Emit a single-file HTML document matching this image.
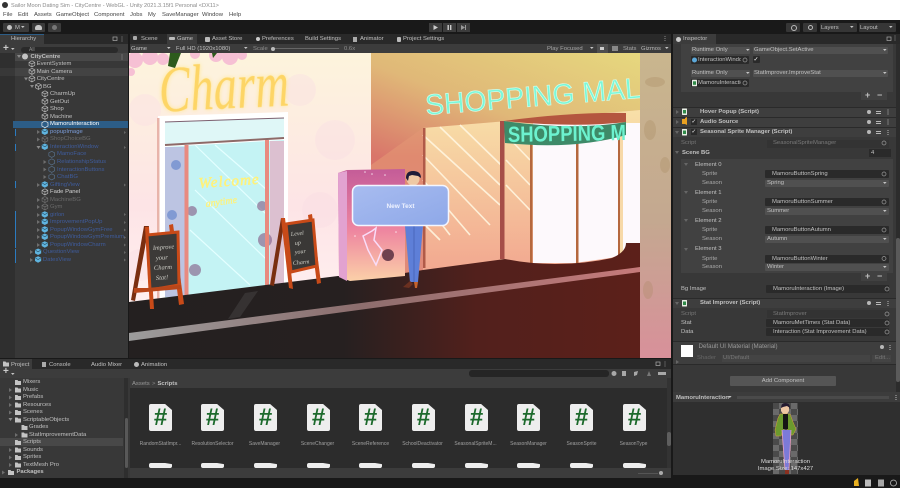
<!DOCTYPE html>
<html><head><meta charset="utf-8"><style>
html,body{margin:0;padding:0}
body{width:900px;height:488px;overflow:hidden;background:#191919;position:relative;font-family:"Liberation Sans",sans-serif}
.b{position:absolute}
.t{position:absolute;white-space:nowrap;font:5.9px/8px "Liberation Sans",sans-serif;color:#c0c0c0}
.d{color:#8e8e8e}.u{color:#3f5c9c}.w{color:#fff}.k{color:#444}.s{font-weight:bold}
.dd{position:absolute;background:#505050;height:7.5px;border-radius:1px}
.ob{position:absolute;background:#2a2a2a;height:8px;border-radius:1px}
.doc{position:absolute;width:23px;height:27px;background:#eee;border-radius:2px;clip-path:polygon(0 0,70% 0,100% 22%,100% 100%,0 100%);text-align:center;font:bold 24px/28px "Liberation Sans",sans-serif;color:#1c6a2c}
.doc2{height:5px;top:463px}
.l{position:absolute;top:440px;width:53px;text-align:center;font:5px/8px "Liberation Sans",sans-serif;color:#a0a0a0;white-space:nowrap}
</style></head><body>
<svg width="0" height="0" style="position:absolute"><defs>
<g id="c" transform="scale(1.15)"><path d="M2.8 .3 5.3 1.6V4.2L2.8 5.6 .3 4.2V1.6Z M.3 1.6 2.8 3 5.3 1.6 M2.8 3V5.6" fill="none" stroke="#b4b4b4" stroke-width=".6"/></g>
<g id="cd" transform="scale(1.15)"><path d="M2.8 .3 5.3 1.6V4.2L2.8 5.6 .3 4.2V1.6Z M.3 1.6 2.8 3 5.3 1.6 M2.8 3V5.6" fill="none" stroke="#707070" stroke-width=".6"/></g>
<g id="p" transform="scale(1.1)"><path d="M2.8 0 5.6 1.4V4.4L2.8 5.9 0 4.4V1.4Z" fill="#5fb4df"/><path d="M.4 1.6 2.8 3 5.2 1.6" fill="none" stroke="#274a5e" stroke-width=".5"/></g>
<g id="pd" transform="scale(1.15)"><path d="M2.8 .3 5.3 1.6V4.2L2.8 5.6 .3 4.2V1.6Z" fill="none" stroke="#58708a" stroke-width=".6"/></g>
<path id="r" d="M0 0 3 2 0 4Z" fill="#6e6e6e"/>
<path id="v" d="M0 0H4L2 3Z" fill="#8a8a8a"/>
<path id="fo" d="M0 1H2.5L3.2 2H6V6H0Z" fill="#c4c4c4"/>
<path id="a" d="M0 0H3.6L1.8 2Z" fill="#c4c4c4"/>
<g id="sc"><rect x="0" y="0" width="5" height="6.5" rx=".5" fill="#e8eee4"/><rect x="1" y="1.5" width="3" height="3.5" fill="#2f8a48"/></g>
</defs></svg>

<!-- window chrome -->
<div class="b" style="left:0;top:0;width:900px;height:20px;background:#fff"></div>
<div class="b" style="left:2px;top:2px;width:6px;height:6px;border-radius:50%;background:#333"></div>
<div class="t" style="left:11px;top:1.5px;color:#8a8a8a;font-size:5.6px">Sailor Moon Dating Sim - CityCentre - WebGL - Unity 2021.3.15f1 Personal &lt;DX11&gt;</div>
<div class="t k" style="left:3px;top:11px">File</div><div class="t k" style="left:18px;top:11px">Edit</div><div class="t k" style="left:34px;top:11px">Assets</div><div class="t k" style="left:56px;top:11px">GameObject</div><div class="t k" style="left:94px;top:11px">Component</div><div class="t k" style="left:130px;top:11px">Jobs</div><div class="t k" style="left:148px;top:11px">My</div><div class="t k" style="left:162px;top:11px">SaveManager</div><div class="t k" style="left:202px;top:11px">Window</div><div class="t k" style="left:229px;top:11px">Help</div>

<!-- toolbar -->
<div class="b" style="left:3px;top:23px;width:26px;height:9px;background:#3b3b3b;border-radius:1px"></div>
<div class="b" style="left:32px;top:23px;width:13px;height:9px;background:#3b3b3b;border-radius:1px"></div>
<div class="b" style="left:48px;top:23px;width:13px;height:9px;background:#3b3b3b;border-radius:1px"></div>
<div class="b" style="left:7px;top:25px;width:5px;height:5px;border-radius:50%;background:#c4c4c4"></div>
<div class="t" style="left:15px;top:23.5px">M</div>
<div class="b" style="left:35px;top:25px;width:7px;height:5px;border-radius:3px 3px 1px 1px;background:#c8c8c8"></div>
<div class="b" style="left:52px;top:25px;width:5px;height:5px;border-radius:50%;background:#777"></div>
<div class="b" style="left:429px;top:23px;width:13px;height:9px;background:#3c3c3c"></div>
<div class="b" style="left:443px;top:23px;width:13px;height:9px;background:#3c3c3c"></div>
<div class="b" style="left:457px;top:23px;width:13px;height:9px;background:#3c3c3c"></div>
<svg class="b" style="left:429px;top:23px" width="41" height="9"><path d="M4.5 2 9 4.5 4.5 7Z" fill="#ccc"/><path d="M18.5 2h1.4v5h-1.4zM21 2h1.4v5H21z" fill="#ccc"/><path d="M32 2 36 4.5 32 7Zm4 0h1v5h-1z" fill="#999"/></svg>
<div class="b" style="left:786px;top:23px;width:14px;height:9px;background:#363636;border-radius:1px"></div>
<div class="b" style="left:803px;top:23px;width:14px;height:9px;background:#363636;border-radius:1px"></div>
<div class="b" style="left:820px;top:23px;width:37px;height:9px;background:#363636;border-radius:1px"></div>
<div class="b" style="left:859px;top:23px;width:37px;height:9px;background:#363636;border-radius:1px"></div>
<div class="b" style="left:790.5px;top:25px;width:4px;height:4px;border:.8px solid #bbb;border-radius:50%"></div>
<div class="b" style="left:807.5px;top:25px;width:3px;height:3px;border:.8px solid #bbb;border-radius:50%"></div>
<div class="t" style="left:821px;top:23.5px">Layers</div><div class="t" style="left:860px;top:23.5px">Layout</div>

<!-- hierarchy -->
<div class="b" style="left:0;top:34px;width:128px;height:10px;background:#292929"></div>
<div class="b" style="left:0;top:34px;width:44px;height:10px;background:#3c3c3c;border-top:1px solid #2c5d87;box-sizing:border-box"></div>
<div class="b" style="left:0;top:44px;width:128px;height:9px;background:#3c3c3c"></div>
<div class="b" style="left:0;top:53px;width:128px;height:305px;background:#383838"></div>
<div class="b" style="left:0;top:53px;width:15px;height:305px;background:#2f2f2f"></div>
<div class="b" style="left:15px;top:53px;width:113px;height:7.5px;background:#484848"></div>
<div class="b" style="left:15px;top:68px;width:113px;height:7.5px;background:#434343"></div>
<div class="b" style="left:0;top:68px;width:15px;height:7.5px;background:#383838"></div>
<div class="b" style="left:13px;top:120.7px;width:115px;height:7.5px;background:#2c5d87"></div>
<div class="b" style="left:21px;top:47px;width:97px;height:6px;background:#2a2a2a;border-radius:3px"></div>
<div class="t" style="left:11px;top:35px">Hierarchy</div>
<div class="t d" style="left:29px;top:45.5px;font-size:5px">All</div>
<div class="t" style="left:3px;top:44.5px;font-size:10px;font-weight:bold;color:#ccc">+</div>
<div class="b" style="left:15px;top:128.5px;width:1px;height:7px;background:#2b7bc0"></div>
<div class="b" style="left:15px;top:143.5px;width:1px;height:7px;background:#2b7bc0"></div>
<div class="b" style="left:15px;top:181px;width:1px;height:7px;background:#2b7bc0"></div>
<div class="b" style="left:15px;top:211px;width:1px;height:37px;background:#2b7bc0"></div>
<div class="b" style="left:15px;top:248.5px;width:1px;height:14.5px;background:#2b7bc0"></div>
<div class="t s" style="left:30.5px;top:52.7px">CityCentre</div>
<div class="t" style="left:36.7px;top:60px">EventSystem</div>
<div class="t" style="left:36.7px;top:67.6px">Main Camera</div>
<div class="t" style="left:36.7px;top:75px">CityCentre</div>
<div class="t" style="left:43px;top:82.5px">BG</div>
<div class="t" style="left:50px;top:90px">CharmUp</div>
<div class="t" style="left:50px;top:97.7px">GetOut</div>
<div class="t" style="left:50px;top:105px">Shop</div>
<div class="t" style="left:50px;top:112.7px">Machine</div>
<div class="t w" style="left:50px;top:120.2px">MamoruInteraction</div>
<div class="t" style="left:50px;top:127.7px;color:#7b9cd8">popupImage</div>
<div class="t d" style="left:50px;top:135.3px;color:#6a6a6a">ShopChoiceBG</div>
<div class="t u" style="left:50px;top:143px">InteractionWindow</div>
<div class="t u" style="left:57px;top:150.3px">MamoFace</div>
<div class="t u" style="left:57px;top:158px">RelationshipStatus</div>
<div class="t u" style="left:57px;top:165.5px">InteractionButtons</div>
<div class="t u" style="left:57px;top:173px">ChatBG</div>
<div class="t u" style="left:50px;top:180.7px">GiftingView</div>
<div class="t" style="left:50px;top:188px;color:#d4d4d4">Fade Panel</div>
<div class="t" style="left:50px;top:195.7px;color:#6a6a6a">MachineBG</div>
<div class="t" style="left:50px;top:203px;color:#6a6a6a">Gym</div>
<div class="t u" style="left:50px;top:210.7px">girlon</div>
<div class="t u" style="left:50px;top:218px">ImprovementPopUp</div>
<div class="t u" style="left:50px;top:225.7px">PopupWindowGymFree</div>
<div class="t u" style="left:50px;top:233px">PopupWindowGymPremium</div>
<div class="t u" style="left:50px;top:240.7px">PopupWindowCharm</div>
<div class="t u" style="left:43px;top:248px">QuestionView</div>
<div class="t u" style="left:43px;top:255.7px">DatesView</div>

<!-- scene tabs -->
<div class="b" style="left:130px;top:34px;width:541px;height:10px;background:#292929"></div>
<div class="b" style="left:167px;top:34px;width:30px;height:10px;background:#3c3c3c"></div>
<div class="b" style="left:130px;top:44px;width:541px;height:9px;background:#3c3c3c"></div>
<div class="t" style="left:141px;top:35px">Scene</div><div class="t" style="left:177px;top:35px">Game</div>
<div class="t" style="left:212px;top:35px">Asset Store</div><div class="t" style="left:262px;top:35px">Preferences</div>
<div class="t" style="left:305px;top:35px">Build Settings</div><div class="t" style="left:360px;top:35px">Animator</div><div class="t" style="left:403px;top:35px">Project Settings</div>
<div class="b" style="left:133px;top:36px;width:4px;height:4px;background:#aaa;border-radius:1px"></div>
<div class="b" style="left:169px;top:37px;width:6px;height:3px;background:#bbb;border-radius:1px"></div>
<div class="b" style="left:205px;top:36.5px;width:5px;height:5px;background:#bbb;border-radius:1px"></div>
<div class="b" style="left:256px;top:37px;width:4px;height:4px;background:#ccc;border-radius:50%"></div>
<div class="b" style="left:353px;top:36.5px;width:4px;height:5px;background:#aaa"></div>
<div class="b" style="left:397px;top:36.5px;width:4px;height:5px;background:#bbb;border-radius:1px"></div>
<div class="t" style="left:131px;top:44.5px">Game</div>
<div class="t" style="left:176px;top:44.5px">Full HD (1920x1080)</div>
<div class="t d" style="left:253px;top:44.5px">Scale</div>
<div class="b" style="left:271px;top:48px;width:68px;height:1px;background:#666"></div>
<div class="b" style="left:271px;top:46.5px;width:4px;height:4px;border-radius:50%;background:#bbb"></div>
<div class="t d" style="left:344px;top:44.5px">0.6x</div>
<div class="t d" style="left:547px;top:44.5px;color:#a8a8a8">Play Focused</div>
<div class="b" style="left:597px;top:44px;width:11px;height:9px;background:#4e4e4e"></div>
<div class="t d" style="left:623px;top:44.5px;color:#a8a8a8">Stats</div>
<div class="t d" style="left:641px;top:44.5px;color:#b8b8b8">Gizmos</div>
<svg class="b" style="left:0;top:0" width="900" height="60"><use href="#a" x="167" y="47"/><use href="#a" x="244" y="47"/><use href="#a" x="590" y="47"/><use href="#a" x="665" y="47"/><rect x="612" y="46" width="6" height="5" fill="#888"/><rect x="600" y="47" width="4" height="3" fill="#ccc"/></svg>

<!-- game scene -->
<svg class="b" style="left:129px;top:53px;filter:blur(.35px)" width="542" height="305" viewBox="129 53 542 305">
<defs>
<linearGradient id="g1" x1="1" y1="0" x2=".1" y2="1"><stop offset="0" stop-color="#e6d87e"/><stop offset=".55" stop-color="#e0b878"/><stop offset="1" stop-color="#d9756a"/></linearGradient>
<linearGradient id="g2" x1="0" y1="0" x2="0" y2="1"><stop offset="0" stop-color="#e0b87c"/><stop offset=".45" stop-color="#e08a70"/><stop offset="1" stop-color="#e08a7a"/></linearGradient>
<linearGradient id="fl" x1="0" y1="0" x2="1" y2="0"><stop offset="0" stop-color="#242020"/><stop offset=".42" stop-color="#262020"/><stop offset=".68" stop-color="#52201c"/><stop offset="1" stop-color="#5c201a"/></linearGradient>
<linearGradient id="st" x1="0" y1="0" x2="1" y2="0"><stop offset="0" stop-color="#9c9c9c"/><stop offset=".45" stop-color="#8d6e6e"/><stop offset="1" stop-color="#c67a7a"/></linearGradient>
<linearGradient id="pi" x1="0" y1="0" x2="0" y2="1"><stop offset="0" stop-color="#c9b68e"/><stop offset=".55" stop-color="#c4a890"/><stop offset="1" stop-color="#d8909a"/></linearGradient>
<linearGradient id="pk" x1="0" y1="0" x2="0" y2="1"><stop offset="0" stop-color="#c45c98"/><stop offset=".55" stop-color="#ee86a0"/><stop offset="1" stop-color="#fbd0a8"/></linearGradient>
<linearGradient id="w1" x1="0" y1="0" x2="0" y2="1"><stop offset="0" stop-color="#f8e0a8"/><stop offset="1" stop-color="#f2a890"/></linearGradient>
<linearGradient id="bt" x1="0" y1="0" x2="1" y2="1"><stop offset="0" stop-color="#a8bcf0"/><stop offset="1" stop-color="#8ea8e8"/></linearGradient>
<linearGradient id="le" x1="0" y1="0" x2="0" y2="1"><stop offset="0" stop-color="#fdf4dc"/><stop offset=".6" stop-color="#fde4e6"/><stop offset="1" stop-color="#fff0f0"/></linearGradient>
<clipPath id="cm"><rect x="423" y="53" width="217" height="230"/></clipPath>
</defs>
<rect x="129" y="53" width="242" height="255" fill="url(#le)"/>
<g fill="#f6c0d4"><circle cx="135" cy="60" r="8"/><circle cx="150" cy="57" r="8"/><circle cx="163" cy="59" r="6"/><circle cx="230" cy="57" r="8"/><circle cx="216" cy="55" r="7"/><circle cx="242" cy="55" r="5"/><circle cx="195" cy="54" r="5"/><circle cx="131" cy="72" r="4"/></g>
<g fill="#f9dce4" opacity=".35"><circle cx="300" cy="90" r="16"/><circle cx="335" cy="140" r="20"/><circle cx="145" cy="110" r="16"/><circle cx="140" cy="265" r="16"/><circle cx="320" cy="210" r="18"/></g>
<!-- mall wall -->
<rect x="371" y="53" width="269" height="230" fill="url(#g2)"/>
<path d="M371 53H640V110L423 128 371 165Z" fill="url(#g1)"/>
<!-- windows -->
<path d="M423 128 640 110V262L423 270Z" fill="url(#w1)"/>
<g stroke="#fff6e0" stroke-width="1.6" opacity=".9"><path d="M440 127 500 185M460 125 501 165M423 135 500 205M423 155 490 225M423 180 470 235M423 200 450 235M425 225 440 240M506 135 530 160M506 160 530 185M506 185 530 210"/></g>
<path d="M533 123H640V248L628 253 610 258 575 263H533Z" fill="#fdf9fc"/>
<path d="M619 118 623 118V257H619Z" fill="#f7d9a8"/>
<rect x="423" y="128" width="2.5" height="140" fill="#b05a48"/>
<rect x="500" y="121" width="4.5" height="138" fill="#a64e48"/>
<rect x="530" y="130" width="2.5" height="134" fill="#b5683e"/>
<rect x="576" y="130" width="2.5" height="134" fill="#b5683e"/>
<rect x="618" y="125" width="2" height="130" fill="#b5683e"/>
<!-- banner -->
<path d="M504 121Q570 112 626 113 L626 122Q575 128 504 121Z" fill="#b4563f"/>
<path d="M504 121Q575 131 626 122V135Q575 150 505 143Z" fill="#3e8a68"/>
<text transform="translate(508 142) rotate(-1)" font-family="Liberation Sans" font-weight="bold" font-size="22" fill="#6cf2cf" textLength="118" lengthAdjust="spacingAndGlyphs">SHOPPING M</text>
<!-- mall neon -->
<g clip-path="url(#cm)"><text transform="translate(426 115) rotate(-4.600)" font-family="Liberation Sans" font-size="29" fill="#7cf8d8" stroke="#d8fff0" stroke-width=".6" textLength="216" lengthAdjust="spacingAndGlyphs">SHOPPING MAL</text></g>
<!-- pillar -->
<rect x="640" y="53" width="31" height="305" fill="url(#pi)"/>
<g fill="#a8895f" opacity=".3"><ellipse cx="655" cy="82" rx="10" ry="5"/><ellipse cx="650" cy="130" rx="6" ry="10"/><ellipse cx="665" cy="165" rx="5" ry="8"/><ellipse cx="648" cy="290" rx="5" ry="9"/></g>
<!-- left storefront -->
<path d="M158 116 288 112V282L158 304Z" fill="#fff"/>
<rect x="157" y="118" width="2.5" height="185" fill="#e8b4aa"/>
<path d="M165 122 284 118V138L165 145Z" fill="#dff7f7"/>
<path d="M165 145 284 138" stroke="#8e6a68" stroke-width="2"/>
<path d="M165 122 284 118" stroke="#7c6070" stroke-width="1"/>
<path d="M165 147 284 140V283L165 300Z" fill="#c4f3f4"/>
<g stroke="#e4ffff" stroke-width="1.2"><path d="M195 145 267 215M195 190 267 260M190 230 250 285M215 145 267 190"/></g>
<path d="M165 147H186V297H165Z" fill="#bcc4e2"/>
<path d="M270 141H284V283L270 285Z" fill="#dcc0d0"/>
<g fill="#8c6c92" opacity=".7"><circle cx="192" cy="211" r="5"/><circle cx="262" cy="206" r="5"/><circle cx="265" cy="240" r="7"/><circle cx="195" cy="270" r="6"/></g>
<g fill="#5278c8" opacity=".55"><circle cx="172" cy="215" r="5"/><circle cx="175" cy="280" r="6"/><circle cx="176" cy="165" r="5"/></g>
<rect x="184.5" y="145" width="4" height="153" fill="#e88a80"/>
<rect x="265" y="140" width="4" height="145" fill="#e88a80"/>
<text transform="translate(199 188) rotate(-4)" font-family="Liberation Serif" font-style="italic" font-size="15" fill="#fff27a" stroke="#fff27a" stroke-width=".5" textLength="60">Welcome</text>
<text transform="translate(206 207) rotate(-8)" font-family="Liberation Serif" font-style="italic" font-size="10" fill="#fff27a" stroke="#fff27a" stroke-width=".3">anytime</text>
<!-- charm -->
<text transform="translate(160 112) rotate(-3)" font-family="Liberation Serif" font-style="italic" font-size="66" fill="#fdd566" textLength="130" lengthAdjust="spacingAndGlyphs" style="filter:drop-shadow(0 0 2px #ffe890)">Charm</text>
<path d="M170 53 181 53 175 68 168 66Z" fill="#2d5a1c"/><path d="M212 53 217 53 213 58Z" fill="#2d5a1c"/>
<!-- floor -->
<path d="M129 302 338 276 368 279 423 270 505 259Q530 264 555 264 585 264 612 258 626 252 626 243L640 243V358H129Z" fill="url(#fl)"/>
<path d="M129 333 640 267 640 272 129 341Z" fill="url(#st)"/>
<path d="M228 319 245 293 258 291 240 317Z" fill="#555" opacity=".35"/>
<!-- pink booth -->
<path d="M338 173 347 170 405 169V276L350 281 339 277Z" fill="url(#pk)"/>
<path d="M338 173 347 171V281L339 277Z" fill="#e2a2d0"/>
<path d="M363 236 372 231 376 228 374 240 382 250 376 265 368 250Z" fill="none" stroke="#f9dcf8" stroke-width="1.5"/>
<circle cx="388" cy="255" r="6" fill="#70414f"/>
<g fill="#fff" opacity=".75"><circle cx="372" cy="174" r=".8"/><circle cx="385" cy="175" r=".8"/><circle cx="355" cy="236" r=".8"/><circle cx="396" cy="232" r=".8"/><circle cx="365" cy="172" r=".8"/></g>
<!-- character -->
<path d="M405 226H423L418 282H410Z" fill="#5e7fd8"/>
<path d="M414 226V282" stroke="#3c58a8" stroke-width=".6"/>
<path d="M403 287 410 281 413 284 409 288Z" fill="#6b3020"/><path d="M414 282H418L417 288H415Z" fill="#c4622c"/>
<circle cx="413" cy="179" r="6.5" fill="#efc9a4"/>
<path d="M406 178Q406 171 413 171 421 171 421 178L418 176 412 175 409 176 408 181Z" fill="#1f1c38"/>
<path d="M406 185H421V188H406Z" fill="#a7a83c"/>
<!-- button -->
<rect x="352.5" y="185.5" width="96" height="40" rx="6" fill="url(#bt)" stroke="#f4f6ff" stroke-width="1.5"/>
<text x="400.5" y="208" text-anchor="middle" font-family="Liberation Sans" font-weight="bold" font-size="6.5" fill="#eef2ff">New Text</text>
<!-- signs -->
<g>
<path d="M144 226 131 300 135 301 149 226Z" fill="#7a2e10"/>
<path d="M173 224 184 304 179 305 169 225Z" fill="#c84a18"/>
<path d="M145 227 150 309 154 309 149 227Z" fill="#c84a18"/>
<path d="M147 235 178 232 179 285 150 290Z" fill="#3c3a38" stroke="#c84a18" stroke-width="3"/>
<path d="M134 288 147 288 181 285 181 289 134 293Z" fill="#b8461a"/>
<text transform="translate(153 250) rotate(-4)" font-family="Liberation Serif" font-style="italic" font-size="6.5" fill="#cfcfc8">Improve</text>
<text transform="translate(156 260) rotate(-4)" font-family="Liberation Serif" font-style="italic" font-size="6.5" fill="#cfcfc8">your</text>
<text transform="translate(154 270) rotate(-4)" font-family="Liberation Serif" font-style="italic" font-size="6.5" fill="#cfcfc8">Charm</text>
<text transform="translate(156 280) rotate(-4)" font-family="Liberation Serif" font-style="italic" font-size="6.5" fill="#cfcfc8">Stat!</text>
<path d="M281 218 270 285 274 286 285 218Z" fill="#7a2e10"/>
<path d="M281 218 289 288 293 289 285 218Z" fill="#c84a18"/>
<path d="M312 214 321 283 317 284 308 215Z" fill="#c84a18"/>
<path d="M286 224 313 220 317 266 291 272Z" fill="#3a3836" stroke="#c84a18" stroke-width="3"/>
<text transform="translate(291 236) rotate(-6)" font-family="Liberation Serif" font-style="italic" font-size="6" fill="#d0d0c8">Level</text>
<text transform="translate(295 245) rotate(-6)" font-family="Liberation Serif" font-style="italic" font-size="6" fill="#d0d0c8">up</text>
<text transform="translate(295 254) rotate(-6)" font-family="Liberation Serif" font-style="italic" font-size="6" fill="#d0d0c8">your</text>
<text transform="translate(293 265) rotate(-6)" font-family="Liberation Serif" font-style="italic" font-size="6" fill="#d0d0c8">Charm</text>
</g>
</svg>

<!-- inspector -->
<div class="b" style="left:673px;top:34px;width:227px;height:10px;background:#292929"></div>
<div class="b" style="left:673px;top:34px;width:43px;height:10px;background:#3c3c3c"></div>
<div class="b" style="left:673px;top:44px;width:227px;height:431px;background:#383838"></div>
<div class="b" style="left:896px;top:44px;width:4px;height:355px;background:#2c2c2c"></div>
<div class="b" style="left:896px;top:238px;width:4px;height:144px;background:#5a5a5a;border-radius:2px"></div>
<div class="t" style="left:683px;top:35px">Inspector</div>
<div class="b" style="left:676px;top:36.5px;width:5px;height:5px;background:#ccc;border-radius:50%"></div>
<div class="b" style="left:681px;top:44px;width:212px;height:48px;background:#414141"></div>
<div class="b" style="left:861px;top:92px;width:26px;height:8px;background:#414141"></div>
<div class="dd" style="left:691px;top:46.5px;width:59px"></div><div class="dd" style="left:753px;top:46.5px;width:135px"></div>
<div class="dd" style="left:691px;top:69.5px;width:59px"></div><div class="dd" style="left:753px;top:69.5px;width:135px"></div>
<div class="ob" style="left:691px;top:56px;width:58px"></div><div class="ob" style="left:691px;top:79px;width:58px"></div>
<div class="b" style="left:753px;top:56px;width:7px;height:7px;background:#2a2a2a;border-radius:1px"></div>
<div class="t" style="left:692px;top:46px">Runtime Only</div><div class="t" style="left:754px;top:46px">GameObject.SetActive</div>
<div class="t" style="left:698px;top:56px;width:43px;overflow:hidden">InteractionWindow</div><div class="t w" style="left:753.5px;top:55.5px">✓</div>
<div class="t" style="left:692px;top:69px">Runtime Only</div><div class="t" style="left:754px;top:69px">StatImprover.ImproveStat</div>
<div class="t" style="left:698px;top:79px;width:43px;overflow:hidden">MamoruInteraction</div>
<div class="t" style="left:865px;top:91px;font-size:9px;font-weight:bold">+</div><div class="t" style="left:877px;top:91px;font-size:9px;font-weight:bold">−</div>

<div class="b" style="left:673px;top:106.5px;width:223px;height:10px;background:#3e3e3e;border-top:1px solid #2a2a2a;box-sizing:border-box"></div>
<div class="b" style="left:673px;top:116.5px;width:223px;height:10px;background:#3e3e3e;border-top:1px solid #2a2a2a;box-sizing:border-box"></div>
<div class="b" style="left:673px;top:127px;width:223px;height:10px;background:#3e3e3e;border-top:1px solid #2a2a2a;box-sizing:border-box"></div>
<div class="t s" style="left:700px;top:107.7px">Hover Popup (Script)</div>
<div class="t s" style="left:700px;top:117.7px">Audio Source</div>
<div class="t s" style="left:700px;top:128px">Seasonal Sprite Manager (Script)</div>
<div class="b" style="left:691px;top:118.5px;width:6px;height:6px;background:#2a2a2a"></div><div class="b" style="left:691px;top:128.8px;width:6px;height:6px;background:#2a2a2a"></div>
<div class="t w" style="left:691.5px;top:117.5px;font-size:5.5px">✓</div><div class="t w" style="left:691.5px;top:127.8px;font-size:5.5px">✓</div>

<div class="t" style="left:681px;top:139px;color:#777">Script</div>
<div class="b" style="left:767px;top:139.5px;width:122px;height:8px;background:#333"></div>
<div class="t" style="left:773px;top:139px;color:#7a7a7a">SeasonalSpriteManager</div>
<div class="t s" style="left:682px;top:149px">Scene BG</div>
<div class="b" style="left:869px;top:149px;width:22px;height:8px;background:#2a2a2a"></div>
<div class="t" style="left:871px;top:149px">4</div>
<div class="b" style="left:681px;top:159px;width:212px;height:114px;background:#414141"></div>
<div class="t" style="left:695px;top:161px">Element 0</div><div class="t" style="left:702px;top:170px;color:#aaa">Sprite</div><div class="t" style="left:702px;top:179.3px;color:#aaa">Season</div>
<div class="t" style="left:695px;top:188.7px">Element 1</div><div class="t" style="left:702px;top:198px;color:#aaa">Sprite</div><div class="t" style="left:702px;top:207.3px;color:#aaa">Season</div>
<div class="t" style="left:695px;top:217px">Element 2</div><div class="t" style="left:702px;top:226px;color:#aaa">Sprite</div><div class="t" style="left:702px;top:235.3px;color:#aaa">Season</div>
<div class="t" style="left:695px;top:245.3px">Element 3</div><div class="t" style="left:702px;top:254.7px;color:#aaa">Sprite</div><div class="t" style="left:702px;top:263.3px;color:#aaa">Season</div>
<div class="ob" style="left:765px;top:170px;width:124px"></div><div class="dd" style="left:765px;top:179.5px;width:124px"></div>
<div class="ob" style="left:765px;top:198px;width:124px"></div><div class="dd" style="left:765px;top:207.5px;width:124px"></div>
<div class="ob" style="left:765px;top:226px;width:124px"></div><div class="dd" style="left:765px;top:235.5px;width:124px"></div>
<div class="ob" style="left:765px;top:254.7px;width:124px"></div><div class="dd" style="left:765px;top:263.5px;width:124px"></div>
<div class="t" style="left:772px;top:170px">MamoruButtonSpring</div><div class="t" style="left:767px;top:179.3px">Spring</div>
<div class="t" style="left:772px;top:198px">MamoruButtonSummer</div><div class="t" style="left:767px;top:207.3px">Summer</div>
<div class="t" style="left:772px;top:226px">MamoruButtonAutumn</div><div class="t" style="left:767px;top:235.3px">Autumn</div>
<div class="t" style="left:772px;top:254.7px">MamoruButtonWinter</div><div class="t" style="left:767px;top:263.3px">Winter</div>
<div class="b" style="left:861px;top:272px;width:26px;height:9px;background:#414141"></div>
<div class="t" style="left:865px;top:272px;font-size:9px;font-weight:bold">+</div><div class="t" style="left:877px;top:272px;font-size:9px;font-weight:bold">−</div>
<div class="t" style="left:681px;top:285px">Bg Image</div>
<div class="ob" style="left:766px;top:285px;width:123px"></div>
<div class="t" style="left:773px;top:285px">MamoruInteraction (Image)</div>
<div class="b" style="left:673px;top:298px;width:223px;height:10px;background:#3e3e3e;border-top:1px solid #2a2a2a;box-sizing:border-box"></div>
<div class="t s" style="left:700px;top:298.7px">Stat Improver (Script)</div>
<div class="t" style="left:681px;top:309.7px;color:#777">Script</div>
<div class="b" style="left:767px;top:310px;width:122px;height:8px;background:#333"></div>
<div class="t" style="left:773px;top:309.7px;color:#7a7a7a">StatImprover</div>
<div class="t" style="left:681px;top:319px">Stat</div><div class="t" style="left:681px;top:328.3px">Data</div>
<div class="ob" style="left:766px;top:319px;width:123px"></div><div class="ob" style="left:766px;top:328.3px;width:123px"></div>
<div class="t" style="left:773px;top:319px">MamoruMetTimes (Stat Data)</div>
<div class="t" style="left:773px;top:328.3px">Interaction (Stat Improvement Data)</div>
<div class="b" style="left:673px;top:341px;width:223px;height:24px;background:#3e3e3e;border-top:1px solid #2a2a2a;border-bottom:1px solid #2a2a2a;box-sizing:border-box"></div>
<div class="b" style="left:681px;top:345px;width:12px;height:12px;background:#fff"></div>
<div class="t" style="left:698.5px;top:342.5px;font-size:6.2px;color:#999">Default UI Material (Material)</div>
<div class="t" style="left:697px;top:354px;color:#666">Shader</div>
<div class="b" style="left:722px;top:354.5px;width:148px;height:7.5px;background:#444"></div>
<div class="t" style="left:723px;top:354px;color:#777">UI/Default</div>
<div class="b" style="left:872px;top:354.5px;width:19px;height:7.5px;background:#444"></div>
<div class="t" style="left:875px;top:354px;color:#777">Edit...</div>
<div class="b" style="left:730px;top:376px;width:106px;height:10px;background:#555;border-radius:1px"></div>
<div class="t" style="left:730px;top:377px;width:106px;text-align:center">Add Component</div>
<div class="b" style="left:673px;top:392px;width:227px;height:10px;background:#3c3c3c"></div>
<div class="b" style="left:737px;top:396px;width:152px;height:3px;background:#4a4a4a"></div>
<div class="t s" style="left:676px;top:393.5px">MamoruInteraction</div>
<div class="b" style="left:673px;top:402px;width:227px;height:73px;background:#2f2f2f"></div>

<!-- preview sprite -->
<svg class="b" style="left:773px;top:403px" width="26" height="71" viewBox="773 403 26 71">
<defs><pattern id="ck" x="773" y="403" width="12" height="12" patternUnits="userSpaceOnUse"><rect width="12" height="12" fill="#6a6a6a"/><rect width="6" height="6" fill="#4a4a4a"/><rect x="6" y="6" width="6" height="6" fill="#4a4a4a"/></pattern></defs>
<rect x="773" y="403" width="25" height="71" fill="url(#ck)"/>
<path d="M781 406Q785 402 789 406L789 411 787 414H783L781 411Z" fill="#eec7a4"/>
<path d="M781 408Q781 403 785 403 790 403 790 408L787 406 783 407Z" fill="#251b30"/>
<path d="M780 414H790L793 422 796 429 793 435H790L787 428H784L781 436H776L775 430 778 418Z" fill="#6c9a2e" stroke="#d8a03c" stroke-width=".5"/>
<rect x="783" y="414" width="5" height="15" fill="#151515"/>
<path d="M782 430H791L789 470H785Z" fill="#7c7ad8"/>
<path d="M782 430 785 470" stroke="#e8a0c0" stroke-width=".8"/><path d="M791 430 789 470" stroke="#e8a0c0" stroke-width=".8"/>
<path d="M785 470H789V474H785Z" fill="#8a3020"/>
</svg>
<div class="t" style="left:673px;top:458px;width:225px;text-align:center;color:#ddd">MamoruInteraction</div>
<div class="t" style="left:673px;top:465.3px;width:225px;text-align:center;color:#ddd">Image Size: 147x427</div>

<!-- project -->
<div class="b" style="left:0;top:359px;width:671px;height:10px;background:#292929"></div>
<div class="b" style="left:0;top:359px;width:32px;height:10px;background:#3c3c3c"></div>
<div class="b" style="left:0;top:369px;width:671px;height:9px;background:#3c3c3c"></div>
<div class="b" style="left:0;top:378px;width:130px;height:100px;background:#383838"></div>
<div class="b" style="left:0;top:438.3px;width:123px;height:7.5px;background:#484848"></div>
<div class="b" style="left:124px;top:378px;width:4px;height:100px;background:#2e2e2e"></div>
<div class="b" style="left:124.5px;top:418px;width:3.5px;height:50px;background:#585858;border-radius:2px"></div>
<div class="b" style="left:130px;top:378px;width:541px;height:100px;background:#2c2c2c"></div>
<div class="b" style="left:130px;top:378px;width:541px;height:10px;background:#3c3c3c"></div>
<div class="b" style="left:130px;top:468px;width:541px;height:10px;background:#3c3c3c"></div>
<div class="b" style="left:469px;top:370px;width:140px;height:7px;background:#252525;border-radius:3px"></div>
<div class="t" style="left:11px;top:361px">Project</div><div class="t" style="left:49px;top:361px">Console</div><div class="t" style="left:91px;top:361px">Audio Mixer</div><div class="t" style="left:141px;top:361px">Animation</div>
<div class="b" style="left:42px;top:362px;width:4px;height:5px;background:#aaa"></div>
<div class="b" style="left:134px;top:362px;width:5px;height:5px;background:#bbb;border-radius:50%"></div>
<div class="t" style="left:3px;top:368px;font-size:10px;font-weight:bold;color:#ccc">+</div>
<div class="t" style="left:132px;top:379.5px;color:#999">Assets</div><div class="t" style="left:152px;top:379.5px;color:#888">&gt;</div><div class="t s" style="left:157.5px;top:379.5px">Scripts</div>
<div class="t" style="left:23px;top:378px">Mixers</div><div class="t" style="left:23px;top:385.5px">Music</div><div class="t" style="left:23px;top:393px">Prefabs</div><div class="t" style="left:23px;top:400.5px">Resources</div><div class="t" style="left:23px;top:408px">Scenes</div><div class="t" style="left:23px;top:415.5px">ScriptableObjects</div><div class="t" style="left:29px;top:423px">Grades</div><div class="t" style="left:29px;top:430.5px">StatImprovementData</div><div class="t" style="left:23px;top:438px">Scripts</div><div class="t" style="left:23px;top:445.5px">Sounds</div><div class="t" style="left:23px;top:453px">Sprites</div><div class="t" style="left:23px;top:460.5px">TextMesh Pro</div><div class="t s" style="left:16.5px;top:468px">Packages</div>

<div class="doc" style="left:149px;top:404px">#</div><div class="doc" style="left:201px;top:404px">#</div><div class="doc" style="left:254px;top:404px">#</div><div class="doc" style="left:307px;top:404px">#</div><div class="doc" style="left:359px;top:404px">#</div><div class="doc" style="left:412px;top:404px">#</div><div class="doc" style="left:465px;top:404px">#</div><div class="doc" style="left:517px;top:404px">#</div><div class="doc" style="left:570px;top:404px">#</div><div class="doc" style="left:623px;top:404px">#</div>
<div class="doc doc2" style="left:149px"></div><div class="doc doc2" style="left:201px"></div><div class="doc doc2" style="left:254px"></div><div class="doc doc2" style="left:307px"></div><div class="doc doc2" style="left:359px"></div><div class="doc doc2" style="left:412px"></div><div class="doc doc2" style="left:465px"></div><div class="doc doc2" style="left:517px"></div><div class="doc doc2" style="left:570px"></div><div class="doc doc2" style="left:623px"></div>
<div class="l" style="left:134px">RandomStatImpr...</div><div class="l" style="left:186px">ResolutionSelector</div><div class="l" style="left:238px">SaveManager</div><div class="l" style="left:291px">SceneChanger</div><div class="l" style="left:344px">SceneReference</div><div class="l" style="left:396px">SchoolDeactivator</div><div class="l" style="left:449px">SeasonalSpriteM...</div><div class="l" style="left:502px">SeasonManager</div><div class="l" style="left:555px">SeasonSprite</div><div class="l" style="left:607px">SeasonType</div>
<div class="b" style="left:667px;top:378px;width:4px;height:90px;background:#333"></div>
<div class="b" style="left:667px;top:432px;width:4px;height:14px;background:#5e5e5e;border-radius:2px"></div>
<div class="b" style="left:638px;top:472.5px;width:20px;height:1px;background:#555"></div>
<div class="b" style="left:659px;top:471px;width:4px;height:4px;border-radius:50%;background:#aaa"></div>

<!-- overlay icons -->
<svg class="b" style="left:0;top:0" width="900" height="488">
<use href="#v" x="17" y="55"/><use href="#c" x="28.7" y="60.5"/><use href="#c" x="28.7" y="68"/><use href="#v" x="24" y="77.5"/><use href="#c" x="28.7" y="75.5"/><use href="#v" x="30" y="85"/><use href="#c" x="35.2" y="83"/>
<circle cx="25" cy="56.5" r="3" fill="#c4c4c4"/>
<use href="#c" x="41.7" y="90.5"/><use href="#c" x="41.7" y="98"/><use href="#c" x="41.7" y="105.5"/><use href="#c" x="41.7" y="113"/><path d="M41.9 122.7 45 121 48 122.7V126L45 127.7 41.9 126Z" fill="none" stroke="#e8e8e8" stroke-width=".7"/>
<use href="#r" x="37" y="130"/><use href="#p" x="41.7" y="128.5"/><use href="#r" x="37" y="137.5"/><use href="#cd" x="41.7" y="136"/>
<use href="#v" x="36.5" y="146"/><use href="#p" x="41.7" y="143.5"/><use href="#pd" x="48.5" y="151"/>
<use href="#r" x="43.5" y="160"/><use href="#pd" x="48.5" y="158.5"/><use href="#r" x="43.5" y="167.5"/><use href="#pd" x="48.5" y="166"/><use href="#r" x="43.5" y="175"/><use href="#pd" x="48.5" y="173.5"/>
<use href="#r" x="37" y="183"/><use href="#p" x="41.7" y="181.2"/><use href="#c" x="41.7" y="188.5"/><use href="#r" x="37" y="198"/><use href="#cd" x="41.7" y="196.2"/><use href="#r" x="37" y="205"/><use href="#cd" x="41.7" y="203.5"/>
<use href="#r" x="37" y="213"/><use href="#p" x="41.7" y="211.2"/><use href="#r" x="37" y="220"/><use href="#p" x="41.7" y="218.5"/><use href="#r" x="37" y="228"/><use href="#p" x="41.7" y="226.2"/><use href="#r" x="37" y="235"/><use href="#p" x="41.7" y="233.5"/><use href="#r" x="37" y="243"/><use href="#p" x="41.7" y="241.2"/>
<use href="#r" x="30" y="250"/><use href="#p" x="35" y="248.5"/><use href="#r" x="30" y="258"/><use href="#p" x="35" y="256.2"/>
<g fill="#666"><path d="M124 131 126 132.5 124 134Z M124 146 126 147.5 124 149Z M124 183.5 126 185 124 186.5Z M124 213 126 214.5 124 216Z M124 221 126 222.5 124 224Z M124 228.5 126 230 124 231.5Z M124 236 126 237.5 124 239Z M124 243.5 126 245 124 246.5Z M124 251 126 252.5 124 254Z M124 258.5 126 260 124 261.5Z"/></g>
<g fill="#a8a8a8"><circle cx="122" cy="55" r=".5"/><circle cx="122" cy="57" r=".5"/><circle cx="122" cy="59" r=".5"/><circle cx="122" cy="37" r=".5"/><circle cx="122" cy="39" r=".5"/><circle cx="122" cy="41" r=".5"/><circle cx="665" cy="36.5" r=".5"/><circle cx="665" cy="38.5" r=".5"/><circle cx="665" cy="40.5" r=".5"/><circle cx="895" cy="36" r=".5"/><circle cx="895" cy="38" r=".5"/><circle cx="895" cy="40" r=".5"/><circle cx="665" cy="362" r=".5"/><circle cx="665" cy="364" r=".5"/><circle cx="665" cy="366" r=".5"/></g>
<rect x="113" y="37" width="4" height="3.5" fill="none" stroke="#aaa" stroke-width=".7"/><rect x="887" y="37" width="4" height="3.5" fill="none" stroke="#aaa" stroke-width=".7"/><rect x="656" y="362" width="4" height="3.5" fill="none" stroke="#aaa" stroke-width=".7"/>
<use href="#a" x="21" y="26"/><use href="#a" x="850" y="26"/><use href="#a" x="889" y="26"/><use href="#a" x="11" y="48"/><use href="#a" x="11" y="373"/>
<use href="#a" x="746" y="49"/><use href="#a" x="883" y="49"/><use href="#a" x="746" y="72"/><use href="#a" x="883" y="72"/>
<use href="#a" x="883" y="182"/><use href="#a" x="883" y="210"/><use href="#a" x="883" y="238"/><use href="#a" x="883" y="266"/>
<use href="#a" x="728" y="396"/>
<g fill="none" stroke="#9a9a9a" stroke-width=".7"><circle cx="745" cy="60" r="2"/><circle cx="745" cy="83" r="2"/><circle cx="884" cy="143" r="2"/><circle cx="884" cy="174" r="2"/><circle cx="884" cy="202" r="2"/><circle cx="884" cy="230" r="2"/><circle cx="884" cy="258.5" r="2"/><circle cx="887" cy="289" r="2"/><circle cx="887" cy="314" r="2"/><circle cx="887" cy="323" r="2"/><circle cx="887" cy="332" r="2"/></g>
<circle cx="694.5" cy="60" r="2.5" fill="#5ca8d8"/><use href="#sc" x="692" y="79.8"/>
<use href="#sc" x="682" y="108.5"/><use href="#sc" x="682" y="129"/><use href="#sc" x="682" y="300"/>
<rect x="682" y="119" width="3" height="5" fill="#e8a020"/><path d="M685 118 687 117V125L685 124Z" fill="#e8a020"/>
<g fill="#666"><path d="M676 110 679 112 676 114Z M676 120 679 122 676 124Z"/><path d="M675 131H679L677 134Z M675 302H679L677 305Z M675 151H679L677 154Z M684 163H688L686 166Z M684 191H688L686 194Z M684 219H688L686 222Z M684 248H688L686 251Z M676 360 679 362 676 364Z"/></g>
<g fill="#b8b8b8"><circle cx="869" cy="112" r="2"/><circle cx="869" cy="122" r="2"/><circle cx="869" cy="132" r="2"/><circle cx="869" cy="303" r="2"/><circle cx="882" cy="347" r="2"/>
<rect x="876" y="111" width="5" height="1"/><rect x="876" y="113" width="5" height="1"/><rect x="876" y="121" width="5" height="1"/><rect x="876" y="123" width="5" height="1"/><rect x="876" y="131" width="5" height="1"/><rect x="876" y="133" width="5" height="1"/><rect x="876" y="302" width="5" height="1"/><rect x="876" y="304" width="5" height="1"/>
<rect x="887.5" y="109.5" width="1" height="1"/><rect x="887.5" y="111.5" width="1" height="1"/><rect x="887.5" y="113.5" width="1" height="1"/><rect x="887.5" y="119.5" width="1" height="1"/><rect x="887.5" y="121.5" width="1" height="1"/><rect x="887.5" y="123.5" width="1" height="1"/><rect x="887.5" y="130" width="1" height="1"/><rect x="887.5" y="132" width="1" height="1"/><rect x="887.5" y="134" width="1" height="1"/><rect x="887.5" y="301" width="1" height="1"/><rect x="887.5" y="303" width="1" height="1"/><rect x="887.5" y="305" width="1" height="1"/><rect x="889.5" y="345" width="1" height="1"/><rect x="889.5" y="347" width="1" height="1"/><rect x="889.5" y="349" width="1" height="1"/><rect x="895.5" y="395" width="1" height="1"/><rect x="895.5" y="397" width="1" height="1"/><rect x="895.5" y="399" width="1" height="1"/></g>
<!-- project tree -->
<use href="#fo" x="15" y="379"/><use href="#fo" x="15" y="386.5"/><use href="#r" x="9" y="388"/><use href="#fo" x="15" y="394"/><use href="#r" x="9" y="395.5"/><use href="#fo" x="15" y="401.5"/><use href="#r" x="9" y="403"/><use href="#fo" x="15" y="409"/><use href="#r" x="9" y="410.5"/><use href="#fo" x="15" y="416.5"/><use href="#v" x="8.5" y="418"/><use href="#fo" x="21.5" y="424"/><use href="#fo" x="21.5" y="431.5"/><use href="#r" x="15" y="433"/><use href="#fo" x="15" y="439"/><use href="#fo" x="15" y="446.5"/><use href="#r" x="9" y="448"/><use href="#fo" x="15" y="454"/><use href="#r" x="9" y="455.5"/><use href="#fo" x="15" y="461.5"/><use href="#r" x="9" y="463"/><use href="#fo" x="8" y="469"/><use href="#r" x="2" y="470.5"/><use href="#fo" x="3" y="360.5"/>
<!-- project toolbar icons -->
<g fill="#a8a8a8"><circle cx="614" cy="373.5" r="2.5"/><rect x="622" y="371" width="4" height="5"/><path d="M634 372 638 371 637 375 634 376Z"/><path d="M649 371 651 376H647Z" fill="#777"/><rect x="658" y="372" width="8" height="3"/></g>
<!-- status -->
<path d="M854 481 858 478 859 486H854Z" fill="#e8b020"/><rect x="865" y="479.5" width="6" height="7" fill="#bcbcbc"/><rect x="878" y="479.5" width="6" height="7" fill="#a8a8a8"/><circle cx="893.5" cy="483" r="3" fill="none" stroke="#b8b8b8" stroke-width=".8"/>
</svg>
</body></html>
